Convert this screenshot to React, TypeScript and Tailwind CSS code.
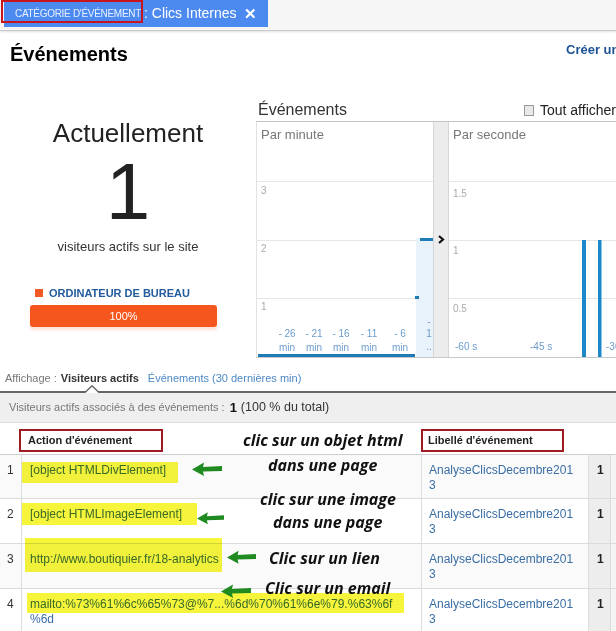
import React from 'react'

const rows = [
  { n: 1, action: ['[object HTMLDivElement]'] },
  { n: 2, action: ['[object HTMLImageElement]'] },
  { n: 3, action: ['http://www.boutiquier.fr/18-analytics'] },
  { n: 4, action: ['mailto:%73%61%6c%65%73@%7...%6d%70%61%6e%79.%63%6f', '%6d'] },
]

const rowHeights = ['h-[44px]', 'h-[45px]', 'h-[45px]', 'h-[45px]']

function Arrow({ className }: { className: string }) {
  return (
    <svg className={className} viewBox="0 0 30 14" fill="#1f8a1f">
      <path d="M0 7.5 L12 0.5 L11 5 L30 4 L30 9 L11 9.6 L12 14 Z" />
    </svg>
  )
}

function MinuteChart() {
  const ticks = [
    { x: 30, l: '- 26' },
    { x: 57, l: '- 21' },
    { x: 84, l: '- 16' },
    { x: 112, l: '- 11' },
    { x: 143, l: '- 6' },
  ]
  return (
    <svg width="176" height="235" className="block">
      <line x1="0" x2="176" y1="59.5" y2="59.5" stroke="#e6e6e6" />
      <line x1="0" x2="176" y1="118.5" y2="118.5" stroke="#e6e6e6" />
      <line x1="0" x2="176" y1="176.5" y2="176.5" stroke="#e6e6e6" />
      <rect x="159" y="116" width="17" height="119" fill="#e7f2fa" />
      <rect x="163" y="116" width="13" height="3" fill="#1f7bb6" />
      <rect x="158" y="174" width="4" height="3" fill="#1f7bb6" />
      <rect x="1" y="232" width="157" height="3" fill="#1f7bb6" />
      <text x="4" y="17" fontSize="13" fill="#777">Par minute</text>
      <text x="4" y="72" fontSize="10" fill="#aaa">3</text>
      <text x="4" y="130" fontSize="10" fill="#aaa">2</text>
      <text x="4" y="188" fontSize="10" fill="#aaa">1</text>
      {ticks.map(t => (
        <g key={t.l} fontSize="10" fill="#6c9ccb" textAnchor="middle">
          <text x={t.x} y="215">{t.l}</text>
          <text x={t.x} y="229">min</text>
        </g>
      ))}
      <g fontSize="10" fill="#6c9ccb" textAnchor="middle">
        <text x="172" y="203">-</text>
        <text x="172" y="215">1</text>
        <text x="172" y="228">..</text>
      </g>
    </svg>
  )
}

function SecondChart() {
  return (
    <svg width="167" height="235" className="block">
      <line x1="0" x2="167" y1="59.5" y2="59.5" stroke="#e6e6e6" />
      <line x1="0" x2="167" y1="118.5" y2="118.5" stroke="#e6e6e6" />
      <line x1="0" x2="167" y1="176.5" y2="176.5" stroke="#e6e6e6" />
      <rect x="133" y="118" width="4" height="117" fill="#1d87c9" />
      <rect x="149" y="118" width="3.5" height="117" fill="#1d87c9" />
      <text x="4" y="17" fontSize="13" fill="#777">Par seconde</text>
      <text x="4" y="75" fontSize="10" fill="#aaa">1.5</text>
      <text x="4" y="132" fontSize="10" fill="#aaa">1</text>
      <text x="4" y="190" fontSize="10" fill="#aaa">0.5</text>
      <g fontSize="10" fill="#6c9ccb">
        <text x="6" y="228">-60 s</text>
        <text x="81" y="228">-45 s</text>
        <text x="157" y="228">-30 s</text>
      </g>
    </svg>
  )
}

export default function App() {
  return (
    <div className="relative w-[616px] h-[631px] overflow-hidden bg-white font-['Liberation_Sans',Arial,sans-serif] text-[#222]">
      {/* filter bar */}
      <div className="h-[31px] bg-[#f6f6f6] border-b border-[#c9c9c9] shadow-[0_1px_2px_rgba(0,0,0,0.12)] flex">
        <div className="relative ml-[4px] h-[27px] w-[264px] bg-[#4d8af0] flex items-center whitespace-nowrap">
          <div className="absolute -left-[3px] top-0 w-[142px] h-[23px] border-2 border-[#c8141c]" />
          <span className="shrink-0 ml-[11px] text-[10px] tracking-[-0.3px] text-[#e8f0ff]">CATÉGORIE D'ÉVÉNEMENT</span>
          <span className="shrink-0 ml-[3px] text-[14px] text-white">: Clics Internes</span>
          <span className="shrink-0 ml-auto mr-[11px] text-[15px] font-bold text-white leading-none">✕</span>
        </div>
      </div>

      {/* heading */}
      <div className="h-[65px] flex items-start pt-[11px] pl-[10px]">
        <h1 className="text-[20px] leading-[24px] font-bold text-black">Événements</h1>
        <span className="ml-auto -mr-[40px] w-[90px] text-[13px] leading-[16px] font-bold text-[#1d5294] whitespace-nowrap">
          Créer un
        </span>
      </div>

      {/* main */}
      <div className="flex h-[263px]">
        <div className="w-[256px] shrink-0 flex flex-col items-center pt-[22px]">
          <div className="text-[26px] leading-[30px] text-[#222]">Actuellement</div>
          <div className="mt-[4px] text-[80px] leading-[80px] text-[#222]">1</div>
          <div className="mt-[7px] text-[13px] leading-[16px] text-[#333]">visiteurs actifs sur le site</div>
          <div className="mt-[31px] self-start ml-[35px] flex items-center h-[14px]">
            <span className="w-[8px] h-[8px] bg-[#f15a22]" />
            <span className="ml-[6px] text-[11px] font-bold text-[#225c9e]">ORDINATEUR DE BUREAU</span>
          </div>
          <div className="mt-[5px] self-start ml-[30px] w-[187px] h-[22px] rounded-[3px] bg-[#f4561d] shadow-[0_3px_3px_rgba(244,86,29,0.18)] flex items-center justify-center text-[11px] text-white">
            100%
          </div>
        </div>

        <div className="w-[360px] shrink-0 flex flex-col">
          <div className="h-[26px] flex items-start border-b border-[#c4c4c4]">
            <span className="ml-[2px] w-[305px] pt-[4px] text-[16px] leading-[20px] text-[#333]">Événements</span>
            <span className="mt-[9px] w-[11px] h-[11px] border border-[#999] bg-[#e9e9e9]" />
            <span className="ml-[6px] pt-[5px] text-[14px] leading-[18px] whitespace-nowrap text-[#222]">Tout afficher</span>
          </div>
          <div className="h-[236px] flex border-b border-[#c8c8c8]">
            <div className="w-[177px] shrink-0 border-l border-[#e2e2e2]">
              <MinuteChart />
            </div>
            <div className="w-[16px] shrink-0 bg-[#ececec] border-x border-[#d6d6d6] flex justify-center">
              <svg className="mt-[113px]" width="8" height="9" viewBox="0 0 8 9">
                <path d="M2 1 L6 4.5 L2 8" stroke="#111" strokeWidth="2.2" fill="none" />
              </svg>
            </div>
            <div className="flex-1">
              <SecondChart />
            </div>
          </div>
        </div>
      </div>

      {/* view switch */}
      <div className="relative h-[34px] border-b-2 border-[#666] flex items-start pt-[12px] pl-[5px] text-[11px] leading-[14px] whitespace-nowrap">
        <span className="text-[#777]">Affichage :</span>
        <span className="ml-[4px] font-bold text-[#333]">Visiteurs actifs</span>
        <span className="ml-[9px] text-[#4c88c6]">Événements (30 dernières min)</span>
        <svg className="absolute left-[85px] -bottom-[2px]" width="14" height="8" viewBox="0 0 14 8">
          <path d="M0 8 L7 1 L14 8 Z" fill="#fff" />
          <path d="M0 7.5 L7 0.8 L14 7.5" stroke="#666" strokeWidth="1.4" fill="none" />
        </svg>
      </div>

      {/* summary */}
      <div className="h-[30px] bg-[#efefef] border-b border-[#dcdcdc] flex items-center pl-[9px] whitespace-nowrap">
        <span className="text-[11px] text-[#777]">Visiteurs actifs associés à des événements :</span>
        <span className="ml-[5px] text-[13px] font-bold text-[#111]">1</span>
        <span className="ml-[4px] text-[12.5px] text-[#333]">(100 % du total)</span>
      </div>

      {/* table header */}
      <div className="h-[32px] flex items-start border-b border-[#cfcfcf] pt-[6px]">
        <div className="ml-[19px] w-[144px] h-[23px] border-2 border-[#9e1b22] flex items-center pl-[7px] text-[11px] font-bold text-[#222]">
          Action d'événement
        </div>
        <div className="ml-[258px] w-[143px] h-[23px] border-2 border-[#9e1b22] flex items-center pl-[5px] text-[11px] font-bold text-[#222]">
          Libellé d'événement
        </div>
      </div>

      {/* table rows */}
      {rows.map((r, i) => (
        <div key={r.n} className={`${rowHeights[i]} flex border-b border-[#dcdcdc] text-[12px] leading-[15px] ${i % 2 === 0 ? 'bg-[#fafafa]' : 'bg-white'}`}>
          <div className="w-[22px] shrink-0 border-r border-[#dcdcdc] pt-[8px] pl-[7px] text-[#333]">{r.n}</div>
          <div className="w-[399px] shrink-0 pt-[8px] pl-[8px] text-[#3a6ea5] whitespace-nowrap">
            {r.action.map((l, k) => (
              <div key={k}>{l}</div>
            ))}
          </div>
          <div className="w-[167px] shrink-0 border-l border-[#dcdcdc] pt-[8px] pl-[7px] text-[#3a6ea5]">
            AnalyseClicsDecembre201
            <br />3
          </div>
          <div className="w-[22px] shrink-0 border-l border-[#dcdcdc] bg-[#ededed] pt-[8px] pl-[8px] font-bold text-[#222]">1</div>
          <div className="flex-1 border-l border-[#dcdcdc] bg-[#f4f4f4]" />
        </div>
      ))}

      {/* marker highlights */}
      <div className="absolute left-[22px] top-[462px] w-[156px] h-[21px] bg-[#f6f53c] mix-blend-multiply" />
      <div className="absolute left-[22px] top-[503px] w-[175px] h-[22px] bg-[#f6f53c] mix-blend-multiply" />
      <div className="absolute left-[25px] top-[538px] w-[197px] h-[34px] bg-[#f6f53c] mix-blend-multiply" />
      <div className="absolute left-[27px] top-[593px] w-[377px] h-[20px] bg-[#f6f53c] mix-blend-multiply" />

      {/* annotations */}
      <div className="font-['Open_Sans',sans-serif] font-bold italic text-[16px] leading-[20px] text-[#111] whitespace-nowrap">
        <span className="absolute left-[243px] top-[430px]">clic sur un objet html</span>
        <span className="absolute left-[268px] top-[455px]">dans une page</span>
        <span className="absolute left-[260px] top-[489px]">clic sur une image</span>
        <span className="absolute left-[273px] top-[512px]">dans une page</span>
        <span className="absolute left-[269px] top-[548px]">Clic sur un lien</span>
        <span className="absolute left-[265px] top-[578px]">Clic sur un email</span>
      </div>
      <Arrow className="absolute left-[192px] top-[462px] w-[30px] h-[14px]" />
      <Arrow className="absolute left-[197px] top-[511px] w-[27px] h-[14px]" />
      <Arrow className="absolute left-[227px] top-[550px] w-[29px] h-[14px]" />
      <Arrow className="absolute left-[220px] top-[584px] w-[32px] h-[14px]" />
    </div>
  )
}
